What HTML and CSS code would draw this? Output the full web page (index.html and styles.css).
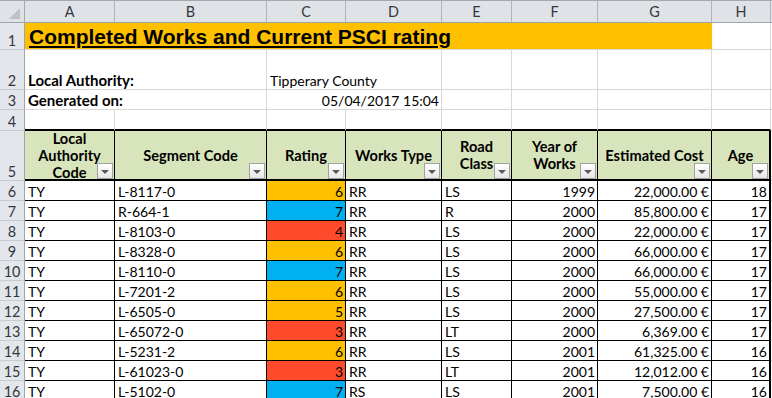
FILE: index.html
```html
<!DOCTYPE html>
<html>
<head>
<meta charset="utf-8">
<link rel="stylesheet" href="styles.css">
</head>
<body>
<div class="sheet">
  <!-- column headers -->
  <div class="corner"><svg width="24" height="22" viewBox="0 0 24 22"><polygon points="20,8 20,19 9,19" fill="#bcc1c6"/></svg></div>
  <div class="ch">A</div><div class="ch">B</div><div class="ch">C</div><div class="ch">D</div>
  <div class="ch">E</div><div class="ch">F</div><div class="ch">G</div><div class="ch">H</div><div class="ch ch-x"></div>

  <!-- row 1 -->
  <div class="rh">1</div>
  <div class="c title"><span>Completed Works and Current PSCI rating</span></div>
  <div class="c"></div><div class="c x"></div>

  <!-- row 2 -->
  <div class="rh">2</div>
  <div class="c s2 b">Local Authority:</div>
  <div class="c s2">Tipperary County</div>
  <div class="c"></div><div class="c"></div><div class="c"></div><div class="c"></div><div class="c x"></div>

  <!-- row 3 -->
  <div class="rh">3</div>
  <div class="c s2 b">Generated on:</div>
  <div class="c s2 r">05/04/2017 15:04</div>
  <div class="c"></div><div class="c"></div><div class="c"></div><div class="c"></div><div class="c x"></div>

  <!-- row 4 -->
  <div class="rh">4</div>
  <div class="c tt"></div><div class="c tt"></div><div class="c tt"></div><div class="c tt"></div>
  <div class="c tt"></div><div class="c tt"></div><div class="c tt"></div><div class="c tt"></div><div class="c x"></div>

  <!-- row 5: table header -->
  <div class="rh">5</div>
  <div class="th">Local<br>Authority<br>Code<i class="fb"></i></div>
  <div class="th">Segment Code<i class="fb"></i></div>
  <div class="th">Rating<i class="fb"></i></div>
  <div class="th">Works Type<i class="fb"></i></div>
  <div class="th">Road<br>Class<i class="fb"></i></div>
  <div class="th">Year of<br>Works<i class="fb"></i></div>
  <div class="th">Estimated Cost<i class="fb"></i></div>
  <div class="th last">Age<i class="fb"></i></div>
  <div class="c x"></div>

  <div class="rh">6</div><div class="d">TY</div><div class="d">L-8117-0</div><div class="d r or">6</div><div class="d">RR</div><div class="d">LS</div><div class="d r">1999</div><div class="d r">22,000.00 €</div><div class="d r last">18</div><div class="c x"></div>
  <div class="rh">7</div><div class="d">TY</div><div class="d">R-664-1</div><div class="d r bl">7</div><div class="d">RR</div><div class="d">R</div><div class="d r">2000</div><div class="d r">85,800.00 €</div><div class="d r last">17</div><div class="c x"></div>
  <div class="rh">8</div><div class="d">TY</div><div class="d">L-8103-0</div><div class="d r rd">4</div><div class="d">RR</div><div class="d">LS</div><div class="d r">2000</div><div class="d r">22,000.00 €</div><div class="d r last">17</div><div class="c x"></div>
  <div class="rh">9</div><div class="d">TY</div><div class="d">L-8328-0</div><div class="d r or">6</div><div class="d">RR</div><div class="d">LS</div><div class="d r">2000</div><div class="d r">66,000.00 €</div><div class="d r last">17</div><div class="c x"></div>
  <div class="rh">10</div><div class="d">TY</div><div class="d">L-8110-0</div><div class="d r bl">7</div><div class="d">RR</div><div class="d">LS</div><div class="d r">2000</div><div class="d r">66,000.00 €</div><div class="d r last">17</div><div class="c x"></div>
  <div class="rh">11</div><div class="d">TY</div><div class="d">L-7201-2</div><div class="d r or">6</div><div class="d">RR</div><div class="d">LS</div><div class="d r">2000</div><div class="d r">55,000.00 €</div><div class="d r last">17</div><div class="c x"></div>
  <div class="rh">12</div><div class="d">TY</div><div class="d">L-6505-0</div><div class="d r or">5</div><div class="d">RR</div><div class="d">LS</div><div class="d r">2000</div><div class="d r">27,500.00 €</div><div class="d r last">17</div><div class="c x"></div>
  <div class="rh">13</div><div class="d">TY</div><div class="d">L-65072-0</div><div class="d r rd">3</div><div class="d">RR</div><div class="d">LT</div><div class="d r">2000</div><div class="d r">6,369.00 €</div><div class="d r last">17</div><div class="c x"></div>
  <div class="rh">14</div><div class="d">TY</div><div class="d">L-5231-2</div><div class="d r or">6</div><div class="d">RR</div><div class="d">LS</div><div class="d r">2001</div><div class="d r">61,325.00 €</div><div class="d r last">16</div><div class="c x"></div>
  <div class="rh">15</div><div class="d">TY</div><div class="d">L-61023-0</div><div class="d r rd">3</div><div class="d">RR</div><div class="d">LT</div><div class="d r">2001</div><div class="d r">12,012.00 €</div><div class="d r last">16</div><div class="c x"></div>
  <div class="rh">16</div><div class="d">TY</div><div class="d">L-5102-0</div><div class="d r bl">7</div><div class="d">RS</div><div class="d">LS</div><div class="d r">2001</div><div class="d r">7,500.00 €</div><div class="d r last">16</div><div class="c x"></div>
</div>
</body>
</html>
```
FILE: styles.css
```css
html, body {
  margin: 0;
  padding: 0;
  background: #fff;
}
body {
  width: 772px;
  height: 398px;
  overflow: hidden;
  font-family: Lato, "Liberation Sans", sans-serif;
  font-size: 14px;
  color: #000;
}
.sheet {
  display: grid;
  grid-template-columns: 25px 90px 152px 79px 96px 70px 86px 114px 59px 1px;
  grid-template-rows: 23px 27px 40px 20px 21px 50px repeat(11, 20px);
}
.sheet > div {
  box-sizing: border-box;
  display: flex;
  align-items: flex-end;
  white-space: nowrap;
  overflow: hidden;
  line-height: 17px;
}
.corner {
  background: #dfe3e8;
  border-top: 1px solid #a3a8ad;
  border-right: 1px solid #a3a8ad;
  border-bottom: 1px solid #9ea4aa;
}
.corner svg { display: block; }
.ch {
  background: #dfe3e8;
  border-top: 1px solid #a3a8ad;
  border-right: 1px solid #aeb3b9;
  border-bottom: 1px solid #9ea4aa;
  justify-content: center;
  align-items: center !important;
  color: #34383d;
  font-size: 14.4px;
}
.ch-x { border-right: none; }
.rh {
  background: #e3e6ea;
  border-right: 1px solid #9ea4aa;
  border-bottom: 1px solid #c7ccd1;
  justify-content: center;
  color: #34383d;
  font-size: 14.4px;
}
.c {
  border-right: 1px solid #d8d8d8;
  border-bottom: 1px solid #d8d8d8;
  padding: 0 2px 0 3px;
}
.x { border-right: none; }
.s2 { grid-column: span 2; }
.b { font-weight: bold; font-size: 15px; }
.r { justify-content: flex-end; }
.title {
  grid-column: span 7;
  background: #ffc000;
  border-right-color: #ffc000 !important;
  font-family: "Liberation Sans", Arial, sans-serif;
  font-weight: bold;
  font-size: 21px;
  line-height: 24px !important;
  padding: 0 3px 0 4px;
}
.title span {
  text-decoration: underline;
  text-decoration-thickness: 2px;
  text-underline-offset: 2px;
}
.tt { border-bottom: 2px solid #000 !important; }
.th {
  position: relative;
  background: #d8e4bc;
  border-right: 1px solid #000;
  border-bottom: 2px solid #000;
  font-weight: bold;
  font-size: 14.6px;
  justify-content: center;
  align-items: center !important;
  text-align: center;
  white-space: normal !important;
}
.th.last, .d.last { border-right: 2px solid #000; }
.fb {
  position: absolute;
  right: 1px;
  bottom: 0;
  width: 16px;
  height: 16px;
  box-sizing: border-box;
  border: 1px solid #a2a2a2;
  background: linear-gradient(#ffffff, #e6e6e6);
}
.fb::after {
  content: "";
  position: absolute;
  left: 3px;
  top: 6px;
  width: 0;
  height: 0;
  border-left: 4px solid transparent;
  border-right: 4px solid transparent;
  border-top: 4px solid #5a5a5a;
}
.d {
  border-right: 1px solid #000;
  border-bottom: 1px solid #000;
  padding: 0 2px 0 3px;
}
.or { background: #ffc000; }
.bl { background: #00b0f0; }
.rd { background: #ff4b2b; }
```
